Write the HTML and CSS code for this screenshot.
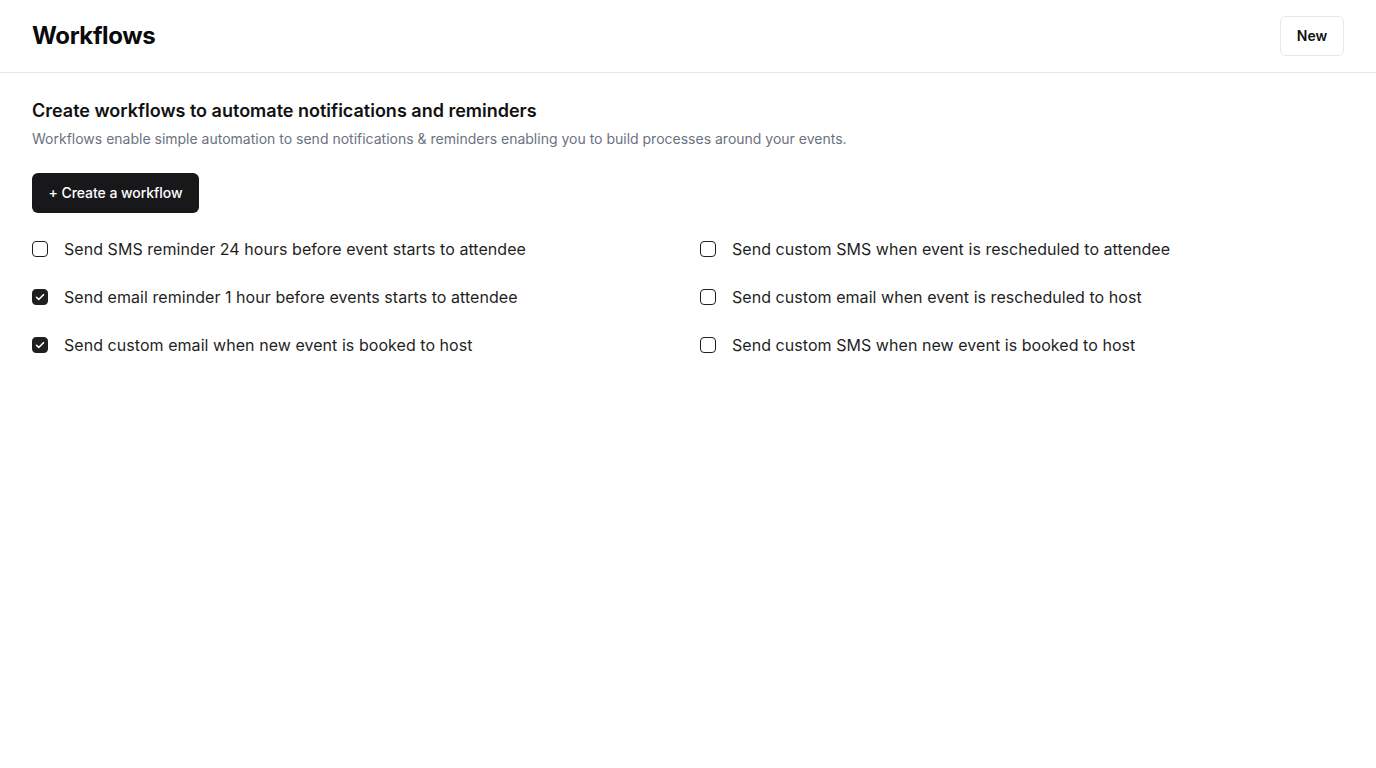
FILE: index.html
```html
<!DOCTYPE html>
<html lang="en">
<head>
<meta charset="utf-8">
<title>Workflows</title>
<link rel="stylesheet" href="styles.css">
</head>
<body>
<header class="topbar">
  <h1 class="title">Workflows</h1>
  <button class="btn-new">New</button>
</header>
<main class="content">
  <h2 class="heading">Create workflows to automate notifications and reminders</h2>
  <p class="subtitle">Workflows enable simple automation to send notifications &amp; reminders enabling you to build processes around your events.</p>
  <button class="btn-create">+ Create a workflow</button>
  <div class="grid">
    <label class="item"><span class="box"></span>Send SMS reminder 24 hours before event starts to attendee</label>
    <label class="item"><span class="box"></span>Send custom SMS when event is rescheduled to attendee</label>
    <label class="item"><span class="box checked"><svg viewBox="0 0 16 16" width="16" height="16"><path d="M4.5 8.3l2.2 2.2 4.8-4.8" fill="none" stroke="#fff" stroke-width="1.6" stroke-linecap="round" stroke-linejoin="round"/></svg></span>Send email reminder 1 hour before events starts to attendee</label>
    <label class="item"><span class="box"></span>Send custom email when event is rescheduled to host</label>
    <label class="item"><span class="box checked"><svg viewBox="0 0 16 16" width="16" height="16"><path d="M4.5 8.3l2.2 2.2 4.8-4.8" fill="none" stroke="#fff" stroke-width="1.6" stroke-linecap="round" stroke-linejoin="round"/></svg></span>Send custom email when new event is booked to host</label>
    <label class="item"><span class="box"></span>Send custom SMS when new event is booked to host</label>
  </div>
</main>
</body>
</html>
```
FILE: styles.css
```css
* { box-sizing: border-box; }
html, body { margin: 0; padding: 0; background: #fff; }
body { font-family: Inter, "Noto Sans", sans-serif; color: #111; }
.topbar {
  height: 73px;
  display: flex;
  align-items: center;
  justify-content: space-between;
  padding: 0 32px;
  border-bottom: 1px solid #e5e7eb;
}
.title { margin: 0 0 2px; font-size: 24px; font-weight: 700; color: #0a0a0a; letter-spacing: -0.4px; }
.btn-new {
  height: 40px; width: 64px;
  padding: 0 0 2px;
  background: #fff;
  border: 1px solid #e5e7eb;
  border-radius: 6px;
  font-family: inherit;
  font-size: 14px;
  font-weight: 600;
  color: #111;
}
.content { padding: 26px 32px 0; }
.heading { margin: 0; font-size: 18px; font-weight: 600; line-height: 24px; color: #111; }
.subtitle { margin: 6px 0 0; font-size: 14px; line-height: 20px; color: #6b7280; }
.btn-create {
  margin-top: 24px;
  height: 40px;
  width: 167px;
  padding: 0 0 2px;
  background: #18181b;
  color: #fff;
  border: none;
  border-radius: 6px;
  font-family: inherit;
  font-size: 14px;
  font-weight: 500;
  letter-spacing: -0.05px;
}
.grid {
  display: grid;
  grid-template-columns: 1fr 1fr;
  column-gap: 24px;
  margin-top: 12px;
}
.item {
  display: flex;
  align-items: center;
  gap: 16px;
  height: 48px;
  font-size: 16px;
  letter-spacing: 0.05px;
  color: #1f1f1f;
}
.box {
  width: 16px; height: 16px;
  border: 1px solid #1f1f1f;
  border-radius: 4px;
  flex: none;
  display: flex;
}
.box.checked { background: #1f1f1f; border-color: #1f1f1f; }
.box svg { margin: -1px; }
```
